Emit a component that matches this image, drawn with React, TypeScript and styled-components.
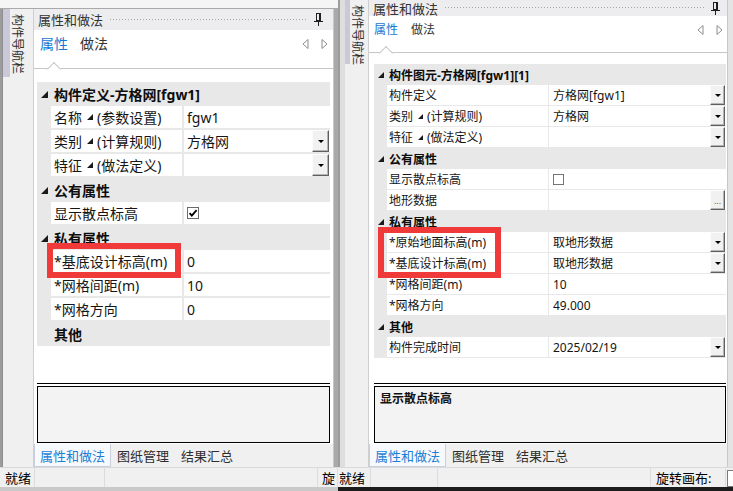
import styled, { createGlobalStyle } from "styled-components";

const GlobalStyle = createGlobalStyle`
  html, body { margin: 0; padding: 0; background: #f0f0f0; }
  body { font-family: "Noto Sans", "Noto Sans CJK SC", sans-serif; color: #1b1b1b; }
  *, *::before, *::after { box-sizing: border-box; }
`;

type Scale = {
    w: number;
    top: number;
    frameW: number;
    frameC: string;
    navW: number;
    stripe: number;
    navTabH: number;
    navPt: number;
    navPr: number;
    edgeW: number;
    edgeC: string;
    headerH: number;
    headerPl: number;
    pinMr: number;
    tabsH: number;
    tabFs: number;
    tabPt: number;
    tabPl: number;
    tabGap: number;
    notchX: number;
    arrowMr: number;
    arrowGap: number;
    gridPt: number;
    inL: number;
    inR: number;
    rowH: number;
    fs: number;
    line: number;
    marginW: number;
    nameW: number;
    namePl: number;
    valPl: number;
    btnW: number;
    chk: number;
    tri: number;
    subTri: number;
};

type Mark = { l: number; t: number; w: number; h: number };

type Row =
    | { kind: "cat"; label: string; tri?: boolean }
    | {
        kind: "prop";
        name: string;
        sub?: string;
        value?: string;
        ctl?: "drop" | "check" | "box" | "more";
        mark?: Mark;
    };

const LEFT: Scale = {
    w: 338, top: 9, frameW: 3, frameC: "#8f8f8f",
    navW: 30, stripe: 7, navTabH: 68, navPt: 5, navPr: 3,
    edgeW: 5, edgeC: "#a9a9a9",
    headerH: 21, headerPl: 4, pinMr: 10,
    tabsH: 39, tabFs: 14, tabPt: 4, tabPl: 6, tabGap: 12, notchX: 15,
    arrowMr: 5, arrowGap: 12,
    gridPt: 13, inL: 3, inR: 3, rowH: 24, fs: 14, line: 2,
    marginW: 14, nameW: 133, namePl: 3, valPl: 3, btnW: 17, chk: 12, tri: 7, subTri: 6,
};

const RIGHT: Scale = {
    w: 395, top: 0, frameW: 7, frameC: "#dedede",
    navW: 23, stripe: 5, navTabH: 64, navPt: 5, navPr: 2,
    edgeW: 6, edgeC: "#e4e4e4",
    headerH: 16, headerPl: 4, pinMr: 7,
    tabsH: 37, tabFs: 12, tabPt: 4, tabPl: 5, tabGap: 13, notchX: 12,
    arrowMr: 4, arrowGap: 12,
    gridPt: 11, inL: 5, inR: 1, rowH: 21, fs: 12, line: 1,
    marginW: 13, nameW: 162, namePl: 2, valPl: 4, btnW: 15, chk: 11, tri: 6, subTri: 5,
};

const LEFT_ROWS: Row[] = [
    { kind: "cat", label: "构件定义-方格网[fgw1]", tri: true },
    { kind: "prop", name: "名称", sub: "(参数设置)", value: "fgw1" },
    { kind: "prop", name: "类别", sub: "(计算规则)", value: "方格网", ctl: "drop" },
    { kind: "prop", name: "特征", sub: "(做法定义)", ctl: "drop" },
    { kind: "cat", label: "公有属性", tri: true },
    { kind: "prop", name: "显示散点标高", ctl: "check" },
    { kind: "cat", label: "私有属性", tri: true },
    { kind: "prop", name: "*基底设计标高(m)", value: "0", mark: { l: -4, t: -7, w: 134, h: 35 } },
    { kind: "prop", name: "*网格间距(m)", value: "10" },
    { kind: "prop", name: "*网格方向", value: "0" },
    { kind: "cat", label: "其他" },
];

const RIGHT_ROWS: Row[] = [
    { kind: "cat", label: "构件图元-方格网[fgw1][1]", tri: true },
    { kind: "prop", name: "构件定义", value: "方格网[fgw1]", ctl: "drop" },
    { kind: "prop", name: "类别", sub: "(计算规则)", value: "方格网", ctl: "drop" },
    { kind: "prop", name: "特征", sub: "(做法定义)", ctl: "drop" },
    { kind: "cat", label: "公有属性", tri: true },
    { kind: "prop", name: "显示散点标高", ctl: "box" },
    { kind: "prop", name: "地形数据", ctl: "more" },
    { kind: "cat", label: "私有属性", tri: true },
    { kind: "prop", name: "*原始地面标高(m)", value: "取地形数据", ctl: "drop", mark: { l: -9, t: -5, w: 123, h: 51 } },
    { kind: "prop", name: "*基底设计标高(m)", value: "取地形数据", ctl: "drop" },
    { kind: "prop", name: "*网格间距(m)", value: "10" },
    { kind: "prop", name: "*网格方向", value: "49.000" },
    { kind: "cat", label: "其他", tri: true },
    { kind: "prop", name: "构件完成时间", value: "2025/02/19", ctl: "drop" },
];

const Screen = styled.div`
    display: flex;
    width: 733px;
    height: 491px;
    overflow: hidden;
`;

const Shot = styled.div<{ $w: number }>`
    width: ${p => p.$w}px;
    flex: none;
    display: flex;
    flex-direction: column;
    height: 100%;
    overflow: hidden;
`;

const TopStrip = styled.div<{ $h: number }>`
    height: ${p => p.$h}px;
    flex: none;
    background: #f5f5f5;
    border-bottom: ${p => (p.$h ? "1px solid #a9a9a9" : "none")};
`;

const Body = styled.div`
    flex: 1;
    display: flex;
    min-height: 0;
`;

const Frame = styled.div<{ $w: number; $c: string }>`
    width: ${p => p.$w}px;
    flex: none;
    background: ${p => p.$c};
    border-left: 2px solid #9c9c9c;
`;

const Nav = styled.div<{ $w: number }>`
    width: ${p => p.$w}px;
    flex: none;
    background: #f0f0f0;
`;

const NavTab = styled.div<{ $h: number; $stripe: number; $pt: number; $pr: number }>`
    height: ${p => p.$h}px;
    border-left: ${p => p.$stripe}px solid #c9c9d9;
    writing-mode: vertical-rl;
    text-orientation: sideways;
    font-size: 12px;
    line-height: 15px;
    color: #2e2e2e;
    padding-top: ${p => p.$pt}px;
    padding-right: ${p => p.$pr}px;
    white-space: nowrap;
`;

const Edge = styled.div<{ $w: number; $c: string }>`
    width: ${p => p.$w}px;
    flex: none;
    background: ${p => p.$c};
    border-left: 1px solid #c8c8c8;
`;

const Panel = styled.div`
    flex: 1;
    min-width: 0;
    display: flex;
    flex-direction: column;
    background: #fff;
    border-left: 1px solid #cfcfcf;
`;

const PanelHeader = styled.div<{ $h: number; $pl: number; $pr: number }>`
    height: ${p => p.$h}px;
    flex: none;
    display: flex;
    align-items: center;
    padding-left: ${p => p.$pl}px;
    padding-right: ${p => p.$pr}px;
    background: #ededef;
    font-size: 13px;
    color: #333;
    white-space: nowrap;
`;

const Dots = styled.div`
    flex: 1;
    height: 4px;
    margin: 0 7px 0 6px;
    background-image: radial-gradient(circle, #a6a6a6 0.75px, transparent 0.9px);
    background-size: 3px 3px;
`;

const TabBar = styled.div<{ $s: Scale }>`
    position: relative;
    height: ${p => p.$s.tabsH}px;
    flex: none;
    display: flex;
    align-items: flex-start;
    gap: ${p => p.$s.tabGap}px;
    padding: ${p => p.$s.tabPt}px ${p => p.$s.arrowMr}px 0 ${p => p.$s.tabPl}px;
    border-bottom: 1px solid #c6c6c6;
`;

const Tab = styled.div<{ $active?: boolean; $fs: number }>`
    font-size: ${p => p.$fs}px;
    line-height: 20px;
    color: ${p => (p.$active ? "#1677d2" : "#333")};
`;

const Notch = styled.div<{ $x: number }>`
    position: absolute;
    left: ${p => p.$x}px;
    bottom: -6px;
    width: 10px;
    height: 10px;
    background: #fff;
    border-left: 1px solid #c6c6c6;
    border-top: 1px solid #c6c6c6;
    transform: rotate(45deg);
`;

const Arrows = styled.div<{ $gap: number }>`
    margin-left: auto;
    height: 20px;
    display: flex;
    align-items: center;
    gap: ${p => p.$gap}px;
`;

const GridArea = styled.div<{ $s: Scale }>`
    flex: 1;
    min-height: 0;
    padding: ${p => p.$s.gridPt}px ${p => p.$s.inR}px 0 ${p => p.$s.inL}px;
    background: #fff;
`;

const GridRow = styled.div<{ $s: Scale; $cat?: boolean }>`
    display: grid;
    grid-template-columns: ${p => p.$s.marginW}px ${p => p.$s.nameW}px 1fr;
    height: ${p => p.$s.rowH}px;
    font-size: ${p => p.$s.fs}px;
    background: #e8e8e8;
    font-weight: ${p => (p.$cat ? 700 : 400)};
    color: ${p => (p.$cat ? "#0d0d0d" : "#151515")};
`;

const TriCell = styled.div`
    display: flex;
    align-items: center;
    justify-content: center;
`;

const CatLabel = styled.div<{ $pl: number }>`
    grid-column: 2 / 4;
    display: flex;
    align-items: center;
    padding-left: ${p => p.$pl}px;
    white-space: nowrap;
`;

const NameCell = styled.div<{ $s: Scale }>`
    position: relative;
    display: flex;
    align-items: center;
    padding-left: ${p => p.$s.namePl}px;
    background: #fff;
    border-bottom: ${p => p.$s.line}px solid #e8e8e8;
    border-right: ${p => p.$s.line}px solid #e8e8e8;
    white-space: nowrap;
`;

const ValueCell = styled.div<{ $s: Scale }>`
    display: flex;
    align-items: center;
    padding-left: ${p => p.$s.valPl}px;
    background: #fff;
    border-bottom: ${p => p.$s.line}px solid #e8e8e8;
    white-space: nowrap;
    min-width: 0;
`;

const SubTri = styled.span`
    display: inline-flex;
    margin: 0 4px 0 5px;
`;

const DropBtn = styled.div<{ $w: number }>`
    width: ${p => p.$w}px;
    align-self: stretch;
    margin: 0 1px 0 auto;
    background: #f1f1f1;
    border: 1px solid;
    border-color: #fcfcfc #5f5f5f #5f5f5f #fcfcfc;
    box-shadow: inset -1px -1px 0 #b4b4b4;
    display: flex;
    align-items: center;
    justify-content: center;
    font-size: 9px;
    line-height: 1;
    color: #666;
    &::before {
        content: "";
        display: ${p => (p.children ? "none" : "block")};
        border-left: 3px solid transparent;
        border-right: 3px solid transparent;
        border-top: 3px solid #000;
    }
`;

const Highlight = styled.div<{ $m: Mark }>`
    position: absolute;
    z-index: 5;
    left: ${p => p.$m.l}px;
    top: ${p => p.$m.t}px;
    width: ${p => p.$m.w}px;
    height: ${p => p.$m.h}px;
    border: 6px solid #f03a3a;
    pointer-events: none;
`;

const DescArea = styled.div<{ $s: Scale }>`
    height: 61px;
    flex: none;
    padding: 0 ${p => p.$s.inR}px 0 ${p => p.$s.inL}px;
    background: #fff;
`;

const DescLine = styled.div`
    height: 1px;
    background: #000;
    margin-bottom: 2px;
`;

const DescBox = styled.div`
    height: 57px;
    border: 1px solid #000;
    background: #f3f3f3;
    padding: 4px 5px;
    font-size: 12px;
    font-weight: 700;
    line-height: 16px;
    color: #111;
`;

const BottomTabs = styled.div`
    height: 23px;
    flex: none;
    display: flex;
    align-items: stretch;
    background: #f0f0f0;
    font-size: 13px;
`;

const BTab = styled.div<{ $active?: boolean }>`
    display: flex;
    align-items: center;
    padding: 0 ${p => (p.$active ? 5 : 6)}px;
    color: ${p => (p.$active ? "#1b7fd6" : "#2e2e2e")};
    background: ${p => (p.$active ? "#f8f9fc" : "transparent")};
    border: ${p => (p.$active ? "1px solid #c9cfdc" : "none")};
    border-top: none;
    white-space: nowrap;
`;

const StatusBar = styled.div`
    height: 20px;
    flex: none;
    display: flex;
    background: #f0f0f0;
    border-top: 1px solid #dadada;
    font-size: 13px;
    color: #000;
`;

const StatusCell = styled.div<{ $w?: number; $pl?: number }>`
    ${p => (p.$w ? `width: ${p.$w}px; flex: none;` : "flex: 1;")}
    display: flex;
    align-items: center;
    padding-left: ${p => p.$pl ?? 0}px;
    border-right: 1px solid #dcdcdc;
    white-space: nowrap;
    overflow: hidden;
`;

const StatusInput = styled.div`
    width: 6px;
    flex: none;
    margin: 2px 0 0 1px;
    border: 1px solid #7a7a7a;
    border-right: none;
    background: #fff;
`;

const BottomStrip = styled.div<{ $c: string }>`
    height: 4px;
    flex: none;
    background: ${p => p.$c};
`;

const Tri = ({ size }: { size: number }) => (
    <svg width={size} height={size} viewBox="0 0 10 10">
        <polygon points="10,0 10,10 0,10" fill="#1a1a1a" />
    </svg>
);

const Pin = () => (
    <svg width="9" height="13" viewBox="0 0 9 13">
        <rect x="2.5" y="0.5" width="4" height="7" fill="none" stroke="#1e1e1e" />
        <line x1="5.5" y1="0.5" x2="5.5" y2="7.5" stroke="#1e1e1e" />
        <line x1="0" y1="8.5" x2="9" y2="8.5" stroke="#1e1e1e" />
        <line x1="4.5" y1="8.5" x2="4.5" y2="13" stroke="#1e1e1e" />
    </svg>
);

const ArrowIcon = ({ dir }: { dir: "l" | "r" }) => (
    <svg width="7" height="10" viewBox="0 0 7 10">
        <polygon
            points={dir === "l" ? "6,0.5 6,9.5 1,5" : "1,0.5 1,9.5 6,5"}
            fill="none"
            stroke="#8c8c8c"
        />
    </svg>
);

const CheckBox = ({ size, checked }: { size: number; checked?: boolean }) => (
    <svg width={size} height={size} viewBox="0 0 12 12">
        <rect x="0.5" y="0.5" width="11" height="11" fill="#fff" stroke="#6a6a6a" />
        {checked && (
            <path d="M2.6 6.2 L4.8 8.6 L9.6 3.2" fill="none" stroke="#000" strokeWidth="1.9" />
        )}
    </svg>
);

const PropGrid = ({ s, rows }: { s: Scale; rows: Row[] }) => (
    <div>
        {rows.map((r, i) =>
            r.kind === "cat" ? (
                <GridRow key={i} $s={s} $cat>
                    <TriCell>{r.tri && <Tri size={s.tri} />}</TriCell>
                    <CatLabel $pl={s.namePl}>{r.label}</CatLabel>
                </GridRow>
            ) : (
                <GridRow key={i} $s={s}>
                    <div />
                    <NameCell $s={s}>
                        {r.name}
                        {r.sub && (
                            <>
                                <SubTri><Tri size={s.subTri} /></SubTri>
                                {r.sub}
                            </>
                        )}
                        {r.mark && <Highlight $m={r.mark} />}
                    </NameCell>
                    <ValueCell $s={s}>
                        {r.value}
                        {r.ctl === "drop" && <DropBtn $w={s.btnW} />}
                        {r.ctl === "more" && <DropBtn $w={s.btnW}>...</DropBtn>}
                        {r.ctl === "check" && <CheckBox size={s.chk} checked />}
                        {r.ctl === "box" && <CheckBox size={s.chk} />}
                    </ValueCell>
                </GridRow>
            )
        )}
    </div>
);

type ShotProps = {
    s: Scale;
    rows: Row[];
    desc?: string;
    status: { w?: number; pl?: number; text?: string }[];
    bottom: string;
    input?: boolean;
};

const Screenshot = ({ s, rows, desc, status, bottom, input }: ShotProps) => (
    <Shot $w={s.w}>
        <TopStrip $h={s.top} />
        <Body>
            <Frame $w={s.frameW} $c={s.frameC} />
            <Nav $w={s.navW}>
                <NavTab $h={s.navTabH} $stripe={s.stripe} $pt={s.navPt} $pr={s.navPr}>
                    构件导航栏
                </NavTab>
            </Nav>
            <Panel>
                <PanelHeader $h={s.headerH} $pl={s.headerPl} $pr={s.pinMr}>
                    属性和做法
                    <Dots />
                    <Pin />
                </PanelHeader>
                <TabBar $s={s}>
                    <Tab $active $fs={s.tabFs}>属性</Tab>
                    <Tab $fs={s.tabFs}>做法</Tab>
                    <Arrows $gap={s.arrowGap}>
                        <ArrowIcon dir="l" />
                        <ArrowIcon dir="r" />
                    </Arrows>
                    <Notch $x={s.notchX} />
                </TabBar>
                <GridArea $s={s}>
                    <PropGrid s={s} rows={rows} />
                </GridArea>
                <DescArea $s={s}>
                    <DescLine />
                    <DescBox>{desc}</DescBox>
                </DescArea>
                <BottomTabs>
                    <BTab $active>属性和做法</BTab>
                    <BTab>图纸管理</BTab>
                    <BTab>结果汇总</BTab>
                </BottomTabs>
            </Panel>
            <Edge $w={s.edgeW} $c={s.edgeC} />
        </Body>
        <StatusBar>
            {status.map((c, i) => (
                <StatusCell key={i} $w={c.w} $pl={c.pl}>{c.text}</StatusCell>
            ))}
            {input && <StatusInput />}
        </StatusBar>
        <BottomStrip $c={bottom} />
    </Shot>
);

export default function App() {
    return (
        <>
            <GlobalStyle />
            <Screen>
                <Screenshot
                    s={LEFT}
                    rows={LEFT_ROWS}
                    status={[
                        { w: 35, pl: 5, text: "就绪" },
                        { w: 70 },
                        {},
                        { w: 20, pl: 4, text: "旋" },
                    ]}
                    bottom="#c9c9c9"
                />
                <Screenshot
                    s={RIGHT}
                    rows={RIGHT_ROWS}
                    desc="显示散点标高"
                    status={[
                        { w: 33, pl: 1, text: "就绪" },
                        { w: 67 },
                        {},
                        { w: 75, pl: 5, text: "旋转画布:" },
                    ]}
                    bottom="#1c1c1c"
                    input
                />
            </Screen>
        </>
    );
}
